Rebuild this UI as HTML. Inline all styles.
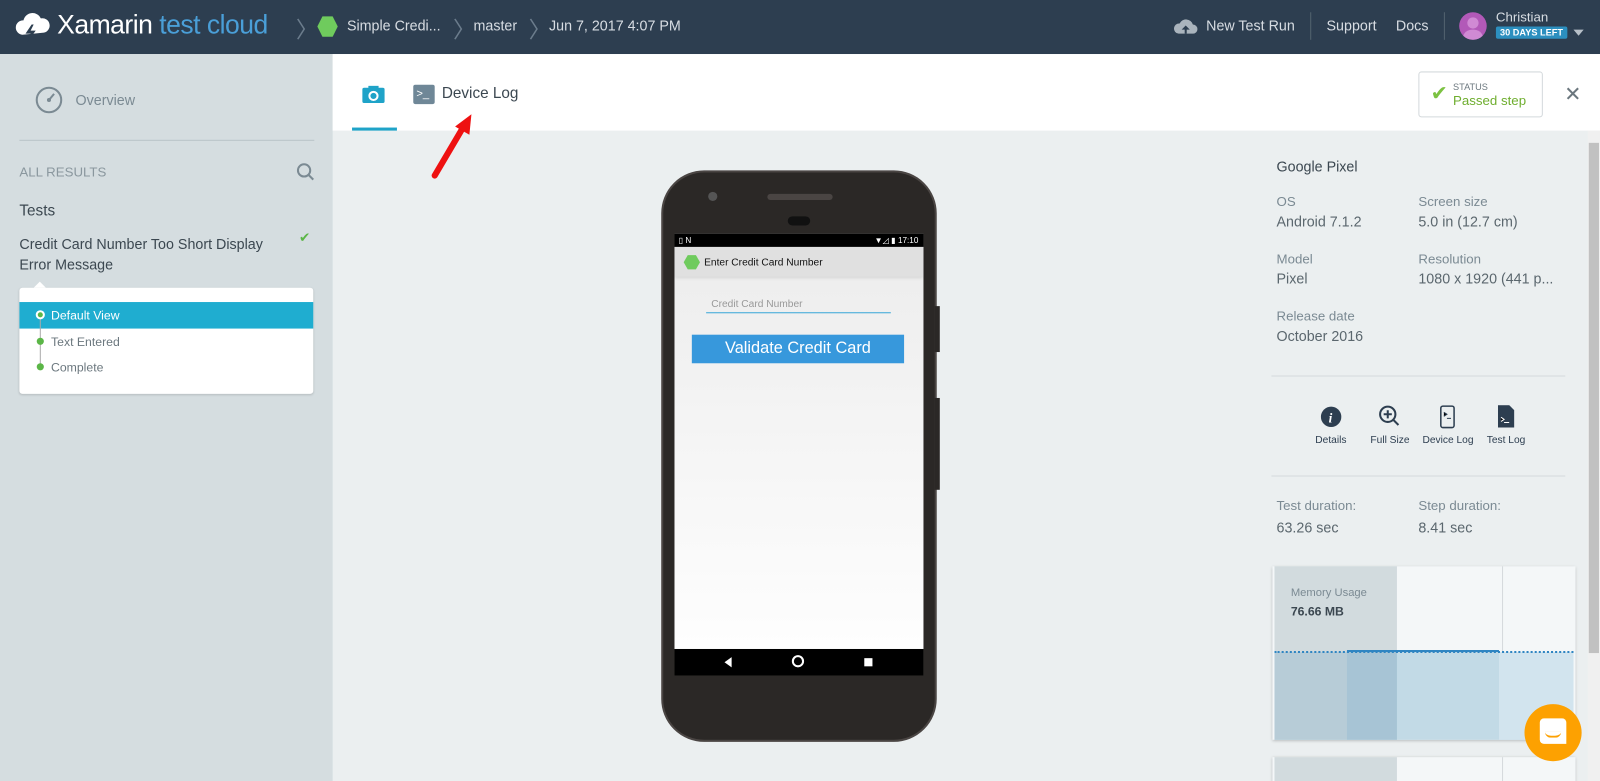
<!DOCTYPE html>
<html><head><meta charset="utf-8"><style>
*{box-sizing:border-box;margin:0;padding:0}
html,body{width:1600px;height:781px;overflow:hidden;background:#ebeff0}
body{font-family:"Liberation Sans",sans-serif;position:relative}
#r{position:absolute;left:0;top:0;width:1568px;height:766px;transform:scale(1.020408);transform-origin:0 0;background:#ebeff0;overflow:hidden}
.a{position:absolute}
.hdr{left:0;top:0;width:1568px;height:53px;background:#2d3e50;color:#d8dde3;font-size:14px}
.side{left:0;top:53px;width:326px;height:713px;background:#d5dde0}
.tabs{left:326px;top:53px;width:1242px;height:75px;background:#fff}
.g{color:#7b8a93}
</style></head><body><div id="r">
<div class="a hdr">
 <svg class="a" style="left:14px;top:10px" width="36" height="34" viewBox="0 0 36 34"><path d="M8 24a7 7 0 0 1 1-14 9 9 0 0 1 17-2 7 7 0 0 1 3 14z" fill="#fff"/><path d="M17 14l-6 9h5l-4 9 9-12h-5l3-6z" fill="#2d3e50"/></svg>
 <div class="a" style="left:56px;top:9px;font-size:26px;color:#fff;letter-spacing:-0.5px">Xamarin <span style="color:#4a9fd8">test cloud</span></div>
 <div class="a" style="left:290px;top:12px;font-size:22px;color:#6b7c8c">〉</div>
 <svg class="a" style="left:310px;top:15px" width="22" height="22"><polygon points="6,1 16,1 21,11 16,21 6,21 1,11" fill="#6fcb5d"/></svg>
 <div class="a" style="left:340px;top:17px">Simple Credi...</div>
 <div class="a" style="left:444px;top:12px;font-size:22px;color:#6b7c8c">〉</div>
 <div class="a" style="left:464px;top:17px">master</div>
 <div class="a" style="left:518px;top:12px;font-size:22px;color:#6b7c8c">〉</div>
 <div class="a" style="left:538px;top:17px">Jun 7, 2017 4:07 PM</div>
 <svg class="a" style="left:1150px;top:16px" width="24" height="20"><path d="M5 17a5 5 0 0 1 1-10 7 7 0 0 1 13 1 4.5 4.5 0 0 1 0 9z" fill="#aab4bd"/><path d="M12 9l-4 4h3v4h2v-4h3z" fill="#2d3e50"/></svg>
 <div class="a" style="left:1182px;top:17px">New Test Run</div>
 <div class="a" style="left:1284px;top:12px;width:1px;height:27px;background:#53636f"></div>
 <div class="a" style="left:1300px;top:17px">Support</div>
 <div class="a" style="left:1368px;top:17px">Docs</div>
 <div class="a" style="left:1415px;top:12px;width:1px;height:27px;background:#53636f"></div>
 <div class="a" style="left:1430px;top:12px;width:27px;height:27px;border-radius:50%;background:#b259b8;overflow:hidden"><div class="a" style="left:8px;top:5px;width:11px;height:11px;border-radius:50%;background:#d08ad4"></div><div class="a" style="left:4px;top:17px;width:19px;height:14px;border-radius:50%;background:#d08ad4"></div></div>
 <div class="a" style="left:1466px;top:9px;font-size:13px">Christian</div>
 <div class="a" style="left:1466px;top:26px;background:#2c8fbf;color:#fff;font-size:9px;font-weight:bold;padding:1px 4px;border-radius:2px">30 DAYS LEFT</div>
 <div class="a" style="left:1542px;top:29px;border:5px solid transparent;border-top:6px solid #b7c0c8"></div>
</div>
<div class="a side">
 <svg class="a" style="left:34px;top:31px" width="28" height="28" viewBox="0 0 28 28"><circle cx="14" cy="14" r="12" fill="none" stroke="#7b8a93" stroke-width="2"/><path d="M14 14l5-6" stroke="#7b8a93" stroke-width="2"/><circle cx="14" cy="14" r="2" fill="#7b8a93"/></svg>
 <div class="a g" style="left:74px;top:37px;font-size:14px">Overview</div>
 <div class="a" style="left:19px;top:84px;width:289px;height:1px;background:#b9c3c8"></div>
 <div class="a" style="left:19px;top:108px;font-size:13px;color:#8a979e">ALL RESULTS</div>
 <svg class="a" style="left:290px;top:106px" width="18" height="18"><circle cx="8" cy="8" r="6" fill="none" stroke="#7b8a93" stroke-width="2"/><path d="M12 12l5 5" stroke="#7b8a93" stroke-width="2"/></svg>
 <div class="a" style="left:19px;top:145px;font-size:15px;color:#3b4750">Tests</div>
 <div class="a" style="left:19px;top:176px;font-size:14px;line-height:20px;color:#3b4750">Credit Card Number Too Short Display<br>Error Message</div>
 <div class="a" style="left:293px;top:172px;color:#5bb647;font-size:13px">✔</div>
 <div class="a" style="left:19px;top:229px;width:288px;height:104px;background:#fff;border-radius:3px;box-shadow:0 1px 2px rgba(0,0,0,.15)">
  <div class="a" style="left:14px;top:-6px;border:6px solid transparent;border-top:0;border-bottom-color:#fff"></div>
  <div class="a" style="left:0;top:14px;width:288px;height:26px;background:#1fadd0"></div>
  <div class="a" style="left:20px;top:28px;width:1px;height:50px;background:#aaa"></div>
  <div class="a" style="left:16px;top:22px;width:9px;height:9px;border-radius:50%;background:#5bb647;border:2px solid #fff"></div>
  <div class="a" style="left:17px;top:49px;width:7px;height:7px;border-radius:50%;background:#5bb647"></div>
  <div class="a" style="left:17px;top:74px;width:7px;height:7px;border-radius:50%;background:#5bb647"></div>
  <div class="a" style="left:31px;top:20px;font-size:12px;color:#fff">Default View</div>
  <div class="a" style="left:31px;top:46px;font-size:12px;color:#6b777e">Text Entered</div>
  <div class="a" style="left:31px;top:71px;font-size:12px;color:#6b777e">Complete</div>
 </div>
</div>
<div class="a tabs">
 <svg class="a" style="left:29px;top:31px" width="22" height="17"><rect x="0" y="2" width="22" height="15" rx="2" fill="#1fa3c8"/><rect x="6" y="0" width="10" height="4" fill="#1fa3c8"/><circle cx="11" cy="10" r="4" fill="none" stroke="#fff" stroke-width="2"/></svg>
 <div class="a" style="left:19px;top:72px;width:44px;height:3px;background:#1fa3c8"></div>
 <div class="a" style="left:79px;top:30px;width:21px;height:19px;background:#6f8797;border-radius:2px;color:#fff;font-size:11px;padding:3px 0 0 3px">&gt;_</div>
 <div class="a" style="left:107px;top:30px;font-size:15px;color:#3b4750">Device Log</div>
 <div class="a" style="left:1064px;top:17px;width:122px;height:45px;border:1px solid #d4d9dc;border-radius:3px">
  <div class="a" style="left:11px;top:8px;color:#7cc242;font-size:20px">✔</div>
  <div class="a" style="left:33px;top:9px;font-size:9px;color:#6b777e">STATUS</div>
  <div class="a" style="left:33px;top:20px;font-size:13px;color:#6fae2f">Passed step</div>
 </div>
 <div class="a" style="left:1207px;top:27px;font-size:20px;color:#6b777e">✕</div>
</div>
<svg class="a" style="left:418px;top:106px" width="50" height="70"><path d="M8 66L34 22" stroke="#e11" stroke-width="6" stroke-linecap="round"/><polygon points="44,6 28,18 42,26" fill="#e11"/></svg>
<div class="a" style="left:648px;top:167px;width:270px;height:560px;background:#2b2826;border-radius:42px;border:2px solid #4a4543"></div>
<div class="a" style="left:916px;top:300px;width:5px;height:45px;background:#2b2826"></div>
<div class="a" style="left:916px;top:390px;width:5px;height:90px;background:#2b2826"></div>
<div class="a" style="left:752px;top:190px;width:64px;height:6px;border-radius:3px;background:#4a4543"></div>
<div class="a" style="left:772px;top:212px;width:22px;height:9px;border-radius:5px;background:#111"></div>
<div class="a" style="left:694px;top:188px;width:9px;height:9px;border-radius:50%;background:#555"></div>
<div class="a" style="left:661px;top:229px;width:244px;height:433px;background:linear-gradient(#ececec,#fff)">
 <div class="a" style="left:0;top:0;width:244px;height:13px;background:#000;color:#fff;font-size:8px;text-align:right;padding-right:5px;line-height:13px">▼◿ ▮ 17:10</div>
 <div class="a" style="left:4px;top:2px;color:#fff;font-size:8px">▯ N</div>
 <div class="a" style="left:0;top:13px;width:244px;height:29px;background:#e0e0e0;box-shadow:0 2px 3px rgba(0,0,0,.1)"></div>
 <svg class="a" style="left:8px;top:20px" width="18" height="16"><polygon points="5,1 13,1 17,8 13,15 5,15 1,8" fill="#6fcb5d"/></svg>
 <div class="a" style="left:29px;top:23px;font-size:10px;color:#111">Enter Credit Card Number</div>
 <div class="a" style="left:36px;top:64px;font-size:10px;color:#999">Credit Card Number</div>
 <div class="a" style="left:31px;top:77px;width:181px;height:1px;background:#3aa8d8"></div>
 <div class="a" style="left:17px;top:99px;width:208px;height:28px;background:#3798dc;color:#fff;font-size:16px;text-align:center;line-height:28px">Validate Credit Card</div>
 <div class="a" style="left:0;top:407px;width:244px;height:26px;background:#000"></div>
 <div class="a" style="left:49px;top:415px;border:5px solid transparent;border-right:7px solid #fff;border-left:0"></div>
 <div class="a" style="left:115px;top:413px;width:12px;height:12px;border-radius:50%;border:2px solid #fff"></div>
 <div class="a" style="left:186px;top:416px;width:8px;height:8px;background:#fff"></div>
</div>
<div class="a" style="left:1251px;top:155px;font-size:14px;color:#3b4750">Google Pixel</div>
<div class="a g" style="left:1251px;top:190px;font-size:13px">OS</div>
<div class="a" style="left:1251px;top:209px;font-size:14px;color:#5b676e">Android 7.1.2</div>
<div class="a g" style="left:1390px;top:190px;font-size:13px">Screen size</div>
<div class="a" style="left:1390px;top:209px;font-size:14px;color:#5b676e">5.0 in (12.7 cm)</div>
<div class="a g" style="left:1251px;top:246px;font-size:13px">Model</div>
<div class="a" style="left:1251px;top:265px;font-size:14px;color:#5b676e">Pixel</div>
<div class="a g" style="left:1390px;top:246px;font-size:13px">Resolution</div>
<div class="a" style="left:1390px;top:265px;font-size:14px;color:#5b676e">1080 x 1920 (441 p...</div>
<div class="a g" style="left:1251px;top:302px;font-size:13px">Release date</div>
<div class="a" style="left:1251px;top:321px;font-size:14px;color:#5b676e">October 2016</div>
<div class="a" style="left:1246px;top:368px;width:288px;height:1px;background:#d4dadd"></div>
<svg class="a" style="left:1294px;top:398px" width="21" height="21"><circle cx="10.5" cy="10.5" r="10" fill="#2d3e50"/><text x="8" y="16" fill="#fff" font-size="13" font-weight="bold" font-style="italic" font-family="Liberation Serif">i</text></svg>
<svg class="a" style="left:1351px;top:397px" width="22" height="22"><circle cx="9" cy="9" r="7.5" fill="none" stroke="#2d3e50" stroke-width="2"/><path d="M9 5v8M5 9h8M14.5 14.5l5 5" stroke="#2d3e50" stroke-width="2"/></svg>
<svg class="a" style="left:1411px;top:397px" width="16" height="24"><rect x="1" y="1" width="13" height="21" rx="2" fill="none" stroke="#2d3e50" stroke-width="1.5"/><path d="M4 7l3 2-3 2M7 13h4" stroke="#2d3e50" stroke-width="1"/></svg>
<svg class="a" style="left:1468px;top:397px" width="16" height="22"><path d="M0 0h11l5 5v17H0z" fill="#2d3e50"/><path d="M3 12l3 2-3 2M6 17h5" stroke="#fff" stroke-width="1"/></svg>
<div class="a" style="left:1289px;top:426px;font-size:10px;color:#2d3e50">Details</div>
<div class="a" style="left:1343px;top:426px;font-size:10px;color:#2d3e50">Full Size</div>
<div class="a" style="left:1394px;top:426px;font-size:10px;color:#2d3e50">Device Log</div>
<div class="a" style="left:1457px;top:426px;font-size:10px;color:#2d3e50">Test Log</div>
<div class="a" style="left:1246px;top:466px;width:288px;height:1px;background:#d4dadd"></div>
<div class="a g" style="left:1251px;top:488px;font-size:13px">Test duration:</div>
<div class="a" style="left:1251px;top:509px;font-size:14px;color:#5b676e">63.26 sec</div>
<div class="a g" style="left:1390px;top:488px;font-size:13px">Step duration:</div>
<div class="a" style="left:1390px;top:509px;font-size:14px;color:#5b676e">8.41 sec</div>
<div class="a" style="left:1247px;top:555px;width:297px;height:170px;background:#f4f7f8;box-shadow:0 1px 3px rgba(0,0,0,.25)">
 <div class="a" style="left:2px;top:0;width:120px;height:170px;background:#d2dbde"></div>
 <div class="a" style="left:225px;top:0;width:1px;height:170px;background:#d4d9dc"></div>
 <div class="a" style="left:2px;top:84px;width:293px;height:86px;background:#c2dae6"></div>
 <div class="a" style="left:2px;top:84px;width:71px;height:86px;background:#b7ccd7"></div>
 <div class="a" style="left:73px;top:84px;width:49px;height:86px;background:#a7c4d5"></div>
 <div class="a" style="left:222px;top:84px;width:73px;height:86px;background:#d2e4ee"></div>
 <div class="a" style="left:2px;top:83px;width:293px;border-top:2px dotted #2f85c2"></div>
 <div class="a" style="left:73px;top:82px;width:149px;height:2px;background:#2f85c2"></div>
 <div class="a" style="left:18px;top:20px;font-size:11px;color:#7b8a93">Memory Usage</div>
 <div class="a" style="left:18px;top:37px;font-size:12px;font-weight:bold;color:#3b4750">76.66 MB</div>
</div>
<div class="a" style="left:1247px;top:742px;width:297px;height:40px;background:#f4f7f8;box-shadow:0 1px 3px rgba(0,0,0,.25)"><div class="a" style="left:2px;top:0;width:120px;height:40px;background:#d2dbde"></div><div class="a" style="left:225px;top:0;width:1px;height:40px;background:#d4d9dc"></div></div>
<div class="a" style="left:1556px;top:128px;width:12px;height:640px;background:#f0f0f0"></div>
<div class="a" style="left:1557px;top:140px;width:10px;height:500px;background:#c1c1c1"></div>
<div class="a" style="left:1494px;top:690px;width:56px;height:56px;border-radius:50%;background:#fda101">
 <div class="a" style="left:15px;top:14px;width:26px;height:25px;background:#fff;border-radius:4px 4px 0 4px"></div>
 <div class="a" style="left:20px;top:27px;width:16px;height:6px;border-bottom:2px solid #fda101;border-radius:0 0 8px 8px"></div>
</div>
</div></body></html>
